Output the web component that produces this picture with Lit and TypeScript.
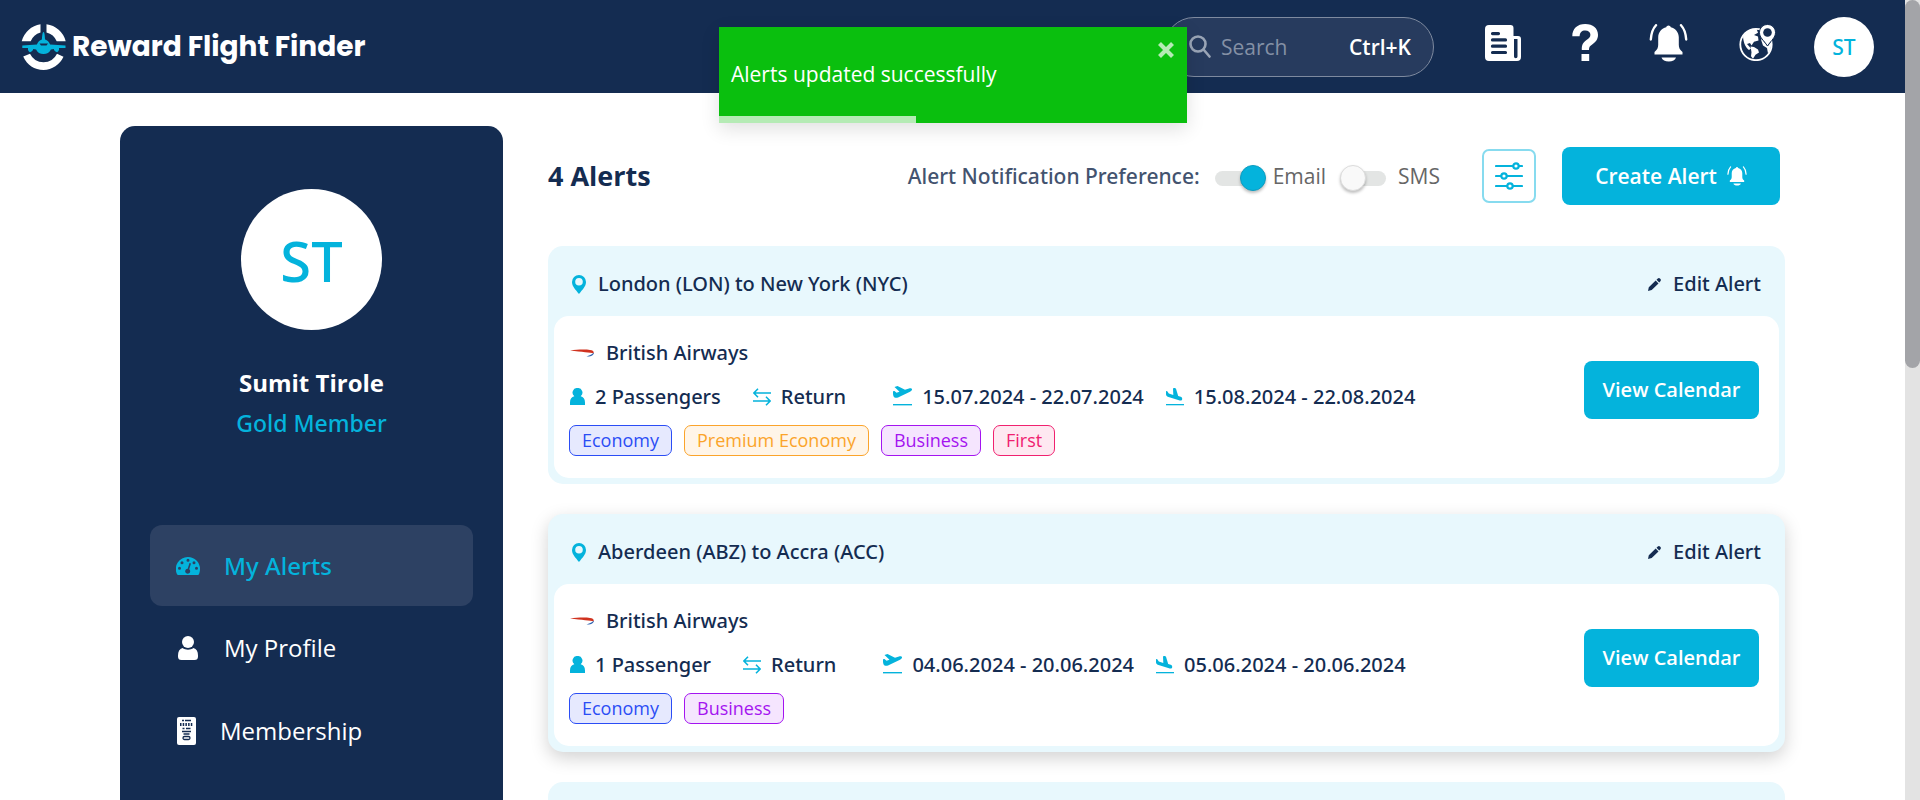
import { LitElement, html, css, svg } from "lit";
import { customElement, state } from "lit/decorators.js";

type Cabin = "Economy" | "Premium Economy" | "Business" | "First";
interface Alert {
  route: string;
  airline: string;
  passengers: string;
  trip: string;
  outbound: string;
  inbound: string;
  cabins: Cabin[];
  raised?: boolean;
}

const ALERTS: Alert[] = [
  {
    route: "London (LON) to New York (NYC)",
    airline: "British Airways",
    passengers: "2 Passengers",
    trip: "Return",
    outbound: "15.07.2024 - 22.07.2024",
    inbound: "15.08.2024 - 22.08.2024",
    cabins: ["Economy", "Premium Economy", "Business", "First"],
  },
  {
    route: "Aberdeen (ABZ) to Accra (ACC)",
    airline: "British Airways",
    passengers: "1 Passenger",
    trip: "Return",
    outbound: "04.06.2024 - 20.06.2024",
    inbound: "05.06.2024 - 20.06.2024",
    cabins: ["Economy", "Business"],
    raised: true,
  },
];

const CABIN_CLASS: Record<Cabin, string> = {
  Economy: "economy",
  "Premium Economy": "premium",
  Business: "business",
  First: "first",
};

const icon = (w: number, h: number, vb: string, body: unknown) =>
  html`<svg class="icon" width=${w} height=${h} viewBox=${vb} fill="currentColor" aria-hidden="true">${body}</svg>`;

const bellBody = svg`
  <path d="M19.500 1.500c1 0 2 .7 2.300 1.800 4.500 1.200 8 4.900 8 10v7.500c0 3 1 5 3.700 7.200v2.500H5.500V28c2.700-2.200 3.700-4.200 3.700-7.200v-7.500c0-5.100 3.500-8.800 8-10 .3-1.100 1.300-1.800 2.300-1.800z"/>
  <path d="M12.500 33.500h14.500c-.8 2.600-3.500 4-7.200 4s-6.500-1.400-7.300-4z"/>
  <path d="M7 1.200C3.900 4.500 2.200 9.500 1.800 15.500M32 1.200C35.100 4.500 36.800 9.500 37.200 15.500" fill="none" stroke="currentColor" stroke-width="2.400" stroke-linecap="round"/>`;

const searchIcon = icon(22, 23, "0 0 22 23", svg`<circle cx="9" cy="9" r="7.500" fill="none" stroke="currentColor" stroke-width="2.600"/><path d="M14.500 14.500l6 7" stroke="currentColor" stroke-width="2.600" stroke-linecap="round"/>`);
const newsIcon = icon(36, 36, "0 0 36 36", svg`<path fill-rule="evenodd" d="M4 0h21.500a3 3 0 0 1 3 3v8H33a3 3 0 0 1 3 3v18a4 4 0 0 1-4 4H4a4 4 0 0 1-4-4V4a4 4 0 0 1 4-4zM29 14v17.500a1.500 1.500 0 0 0 3.500 0V14zM7.500 7a1.500 1.500 0 0 0 0 3.200h6a1.500 1.500 0 0 0 0-3.200zM7.500 13.300a1.500 1.500 0 0 0 0 3.200h13a1.500 1.500 0 0 0 0-3.200zM7.500 19.600a1.500 1.500 0 0 0 0 3.200h13a1.500 1.500 0 0 0 0-3.200zM7.500 25.900a1.500 1.500 0 0 0 0 3.200h13a1.500 1.500 0 0 0 0-3.200z"/>`);
const helpIcon = icon(26, 37, "0 0 26 37", svg`<path d="M.3 12.200C.3 4.800 5.300 0 13.200 0 21 0 26 4.400 26 10.800c0 4.600-2.300 7.300-5.800 9.700-2.600 1.800-3.200 2.700-3.200 5.500H9.800c-.1-5.200 1.100-7.500 4.700-10 2.700-1.900 3.900-3 3.900-5.200 0-2.800-2-4.400-5.200-4.400-3.400 0-5.400 2-5.600 5.800z"/><path d="M9.500 30h7.700v7H9.500z"/>`);
const bellIcon = icon(39, 38, "0 0 39 38", bellBody);
const globeIcon = icon(37, 37, "0 0 37 37", svg`
  <circle cx="17" cy="20.500" r="15.700" fill="none" stroke="currentColor" stroke-width="1.800"/>
  <path d="M4 12.500C7 7.500 12 4.500 17.500 4.700l1.500 4-4 2.300 4 1.500.5 4-4.500 1.200-2.500 3.800-1.500-2.500-3 1 4 4.500-2 1.500C7.500 24.500 4.500 20 4 12.500z"/>
  <path d="M11.500 22.500l3.500.5 4 2.500 1 3-3.500 2.200-2.500 4-2-2.500.5-4z"/>
  <path d="M22 15.500l1-.3 5.500 7 3.500-4c.5 4.500-.5 8.500-3 11.300l-1-5.500-4-2.500z"/>
  <path d="M28.500.5c4.500 0 8 3.500 8 8 0 5-4 7.500-8 13.500-4-6-8-8.500-8-13.500 0-4.500 3.500-8 8-8z" stroke="#142c51" stroke-width="1"/>
  <circle cx="28.500" cy="8.500" r="4.300" fill="#142c51"/>`);
const closeIcon = icon(18, 18, "0 0 18 18", svg`<path d="M2.500 2.500l13 13M15.500 2.500l-13 13" stroke="currentColor" stroke-width="4.200"/>`);
const slidersIcon = icon(28, 30, "0 0 28 30", svg`<g fill="none" stroke="currentColor" stroke-width="2.200" stroke-linecap="round"><path d="M1 5h16.500M24 5h3M1 15h5M12 15h15M1 25h11M18 25h9"/><circle cx="21" cy="5" r="2.700"/><circle cx="9" cy="15" r="2.700"/><circle cx="15" cy="25" r="2.700"/></g>`);
const smallBell = icon(20, 20, "0 0 39 38", bellBody);
const pinIcon = icon(14, 19, "0 0 14 19", svg`<path fill-rule="evenodd" d="M7 0a7 7 0 0 1 7 7c0 4.500-3.500 7.500-7 12-3.500-4.500-7-7.500-7-12a7 7 0 0 1 7-7zm0 3a3.800 3.800 0 1 0 0 7.600A3.800 3.800 0 0 0 7 3z"/>`);
const pencilIcon = icon(13, 13, "0 0 13 13", svg`<path d="M0 13l.8-3.800L7.700 2.600l2.800 2.800L3.700 12.100zM8.500 1.800L9.800.6c.7-.7 1.500-.7 2.200 0l.4.400c.7.700.7 1.500 0 2.200l-1.200 1.300z"/>`);
const baIcon = html`<svg class="icon" width="24" height="8" viewBox="0 0 24 8" aria-hidden="true"><path d="M0 1.600C8 .2 16 .5 20 .9c3 .4 4.200 1.500 3.500 3.600C20.500 3.200 12 3.400 0 1.600z" fill="#d0321f"/><path d="M24 3.500c-.3 2.800-3.500 4.500-7.500 4 2.500-1.200 5-1.300 7.500-4z" fill="#2f63b0"/></svg>`;
const personIcon = icon(15, 17, "0 0 15 17", svg`<path d="M7.500 0a4.600 4.600 0 0 1 3.200 8.200c2.600.6 4.300 2.600 4.300 6.300V17H0v-2.500c0-3.700 1.700-5.700 4.300-6.300A4.600 4.600 0 0 1 7.500 0z"/>`);
const swapIcon = icon(18, 18, "0 0 18 18", svg`<path d="M18 5H1M5 .7L.9 5 5 9.300M0 13h17M13 8.700l4.100 4.300-4.100 4.300" fill="none" stroke="currentColor" stroke-width="1.500"/>`);
const takeoffIcon = icon(19, 21, "0 0 19 21", svg`<path d="M0 5.300l1.500-.3 2 1.700 3-1L1.500 1 4.500 0l7.500 3.700 4-1.300c1.500-.5 2.800-.2 3 .8.200 1-.8 1.900-2 2.500L5 11.500c-2 .8-3.700.2-4.500-1.300C-.1 9 0 7 0 5.300z"/><path d="M0 18h19v1.400H0z"/>`);
const landingIcon = icon(18, 18, "0 0 18 18", svg`<path d="M0 3l1.300.2 1.500 2.400 4.500 1.300L7 .5C8 0 9.500-.2 10 .8l2.200 7.200 2.500.8c1.300.4 1.800 1.500 1.300 3.200-.8.600-2 .6-3 .3L2.500 9C.5 8.300 0 7.500 0 6z"/><path d="M0 16h18v1.300H0z"/>`);
const gaugeIcon = icon(24, 18, "0 0 24 18", svg`<path fill-rule="evenodd" d="M12 0a12 12 0 0 1 12 12c0 2-.4 3.800-1 5.200-.3.500-.7.800-1.200.8H2.200c-.5 0-.9-.3-1.200-.8A12 12 0 0 1 12 0zm0 1.800a1.500 1.500 0 1 0 0 3 1.500 1.500 0 0 0 0-3zM6 4.300a1.500 1.500 0 1 0 0 3 1.500 1.500 0 0 0 0-3zm12 0a1.500 1.500 0 1 0 0 3 1.500 1.500 0 0 0 0-3zM3.500 9.800a1.500 1.500 0 1 0 0 3 1.500 1.500 0 0 0 0-3zm17 0a1.500 1.500 0 1 0 0 3 1.500 1.500 0 0 0 0-3zM13.500 6l-1.800 5.700a2.500 2.500 0 1 0 1.500.5L15 6.500z"/>`);
const profileIcon = icon(20, 24, "0 0 20 24", svg`<circle cx="10" cy="6" r="6"/><path d="M4.500 12c3 2.200 8 2.200 11 0 3 .8 4.500 3.500 4.500 7.500v1A3.500 3.500 0 0 1 16.500 24h-13A3.500 3.500 0 0 1 0 20.500v-1C0 15.500 1.500 12.800 4.500 12z"/>`);
const memberIcon = icon(19, 28, "0 0 19 28", svg`<rect width="19" height="28" rx="2"/><g stroke="#142c51" fill="none"><path d="M5 3.500h2M8 3.500h6M5.500 11.500h2M9 11.500h4.500" stroke-width="1.500"/><path d="M3 7.500h13" stroke-width="3" stroke-dasharray="1.500 1.200"/><path d="M5 14.500h9M6.500 17h6" stroke-width="1.500"/><rect x="6" y="19.500" width="7" height="3" rx="1.500" stroke-width="1.300"/></g>`);
const logoMark = html`<svg class="mark" width="46" height="46" viewBox="0 0 46 46" aria-hidden="true">
  <path d="M19.500.3v8.100a15 15 0 0 0-9.800 8.800H.7A23 23 0 0 1 19.500.3zM25.500.3v8.100a15 15 0 0 1 10.200 8.800h9A23 23 0 0 0 25.500.3z" fill="#fff"/>
  <path d="M2.200 32.500L9 29.800a15 15 0 0 0 27 0l6.500 3A22.800 22.800 0 0 1 22.500 46c-9 0-16.500-5-20.300-13.500z" fill="#fff"/>
  <path d="M22.500 8c1.200 0 1.300 5 1.600 7.500 2.300.6 4 2.500 5 5l15.400 1v2.400H38c.3 2-.4 3.500-1.900 4.300-1.700-.2-3-1.600-3.300-3.200l-2.900.5c-1.300 3-4 4.500-7.400 4.500s-6.100-1.500-7.400-4.500l-2.900-.5c-.3 1.600-1.600 3-3.300 3.200-1.500-.8-2.200-2.300-1.900-4.300H1.300v-2.400l14.600-1c1-2.500 2.700-4.400 5-5C21.200 13 21.300 8 22.500 8z" fill="#04b3dc"/>
  <path d="M18.500 19.500h8.500l-1.500 2h-5.500z" fill="#142c51"/></svg>`;

@customElement("app-root")
export class AppRoot extends LitElement {
  @state() private email = true;
  @state() private sms = false;
  @state() private progress = 42;

  static styles = css`
    :host {
      --navy: #142c51;
      --cyan: #04b3dc;
      --pale: #e8f8fd;
      --face: "Open Sans", "Noto Sans", sans-serif;
      --medium: "Noto Sans", "Open Sans", sans-serif;
      display: grid;
      grid-template-columns: minmax(0, 1fr) 15px;
      height: 100vh;
      overflow: hidden;
      background: #fff;
      color: var(--navy);
      font: 500 20px/28px var(--medium);
    }
    * { box-sizing: border-box; }
    button { font: inherit; border: 0; padding: 0; margin: 0; background: none; color: inherit; cursor: pointer; }
    a { color: inherit; text-decoration: none; }
    h1, h2, p { margin: 0; font: inherit; }
    .icon { display: block; flex: none; }
    .page { overflow: hidden; }
    .scroll { background: #e3e3e3; }
    .thumb { height: 46%; border-radius: 8px; background: #a3a4a8; }

    .header { display: flex; align-items: center; height: 93px; padding: 0 31px 0 21px; background: var(--navy); color: #fff; }
    .brand { display: flex; align-items: center; gap: 5px; margin-right: auto; font: 700 28px/40px Poppins, "Open Sans", sans-serif; }
    .mark { display: block; }
    .search { display: flex; align-items: center; gap: 10px; width: 270px; height: 60px; padding: 0 22px 0 24px; border: 1px solid #7e8a9f; border-radius: 30px; background: #273b5e; color: #9aa5b6; }
    .search input { flex: 1; min-width: 0; border: 0; padding: 0; background: none; outline: 0; font: 400 21px/28px var(--face); color: #fff; }
    .search input::placeholder { color: #8490a5; opacity: 1; }
    .search kbd { font: 600 21px/28px var(--face); color: #fff; }
    .tools { display: flex; align-items: center; gap: 51px; margin: 0 38px 8px 51px; }
    .me { display: grid; place-items: center; width: 60px; height: 60px; border-radius: 50%; background: #fff; color: var(--cyan); font-size: 21px; }

    .toast { position: absolute; top: 27px; left: calc(50% - 241px); display: flex; flex-direction: column; width: 468px; height: 96px; background: #0abf0e; color: #fff; box-shadow: 0 6px 18px rgba(0, 0, 0, 0.12); }
    .toast-row { display: flex; flex: 1; align-items: flex-start; justify-content: space-between; padding: 14px 12px 0 12px; }
    .toast-row p { padding-top: 19px; font: 400 21px/28px var(--face); }
    .toast-row button { color: #b5ebb5; }
    .track { height: 7px; }
    .bar { height: 100%; background: #b5ebb5; }

    .body { display: grid; grid-template-columns: 383px minmax(0, 1fr); gap: 45px; padding: 33px 120px 0; }
    .side { min-height: 900px; padding: 63px 30px; border-radius: 15px; background: var(--navy); color: #fff; }
    .who { display: flex; flex-direction: column; align-items: center; text-align: center; }
    .photo { display: grid; place-items: center; width: 141px; height: 141px; margin-bottom: 37px; border-radius: 50%; background: #fff; color: var(--cyan); font-size: 56px; }
    .name { font: 700 24px/32px var(--face); }
    .tier { margin-top: 8px; color: var(--cyan); font-size: 23px; line-height: 32px; }
    .nav { margin-top: 86px; }
    .nav a { display: flex; align-items: center; gap: 24px; height: 83px; padding: 0 26px; border-radius: 12px; font: 400 24px/32px var(--face); }
    .nav a.on { height: 81px; background: #2d4163; color: var(--cyan); font: 500 24px/32px var(--medium); }
    .glyph { display: grid; place-items: center; width: 24px; }
    .glyph.narrow { width: 20px; }

    .bar-top { display: flex; align-items: center; height: 58px; margin: 21px 5px 41px 0; }
    .bar-top h1 { margin-right: auto; font: 700 27px/36px var(--face); }
    .pref { margin-right: 15px; color: #43536f; font-size: 21px; }
    .toggle { display: flex; align-items: center; gap: 7px; color: #666; font: 400 21px/28px var(--face); }
    .toggle + .toggle { margin-left: 14px; gap: 12px; }
    .toggle input { appearance: none; display: flex; align-items: center; width: 46px; height: 15px; margin: 4px 0 0; border-radius: 8px; background: #e3e5e4; }
    .toggle input:checked { justify-content: flex-end; width: 51px; background: linear-gradient(90deg, #e3e5e4 46px, transparent 46px); }
    .toggle input::before { content: ""; width: 24px; height: 24px; border: 1px solid #dcdcdc; border-radius: 50%; background: #f9f9f9; box-shadow: 0 2px 3px rgba(0, 0, 0, 0.25); }
    .toggle input:checked::before { border-color: #0c9cc0; background: var(--cyan); }
    .filter { display: grid; place-items: center; width: 54px; height: 54px; margin: 0 26px 0 42px; border: 2px solid #87dbef; border-radius: 7px; color: var(--cyan); }
    .cta { display: flex; align-items: center; justify-content: center; gap: 10px; height: 58px; border-radius: 8px; background: var(--cyan); color: #fff; font: 600 20px/28px var(--face); }
    .create { width: 218px; font-size: 21px; }
    .view { width: 175px; margin-bottom: 14px; }

    .cards { display: flex; flex-direction: column; gap: 30px; }
    .card { padding: 0 6px 6px; border-radius: 15px; background: var(--pale); }
    .card.raised { box-shadow: 0 6px 18px rgba(0, 0, 0, 0.18); }
    .card-head { display: flex; align-items: center; gap: 12px; height: 70px; padding: 6px 18px 0; }
    .card-head h2 { margin-right: auto; }
    .pin { color: var(--cyan); }
    .edit { display: flex; align-items: center; gap: 12px; }
    .panel { display: flex; align-items: center; justify-content: space-between; height: 162px; padding: 0 20px 0 15px; border-radius: 15px; background: #fff; }
    .airline { display: flex; align-items: center; gap: 12px; padding-left: 1px; }
    .facts { display: flex; align-items: center; margin: 16px 0 14px; padding-left: 1px; }
    .fact { display: flex; align-items: center; gap: 10px; margin-right: 22px; white-space: nowrap; }
    .fact .icon { color: var(--cyan); }
    .fact.people { margin-right: 32px; }
    .fact.trip { margin-right: 47px; }
    .chips { display: flex; gap: 12px; }
    .chip { height: 31px; padding: 0 12px; border: 1px solid; border-radius: 7px; font: 400 18px/29px var(--face); }
    .economy { color: #2b4df5; background: #e6e9fe; }
    .premium { color: #fba42b; background: #fff5e8; }
    .business { color: #a414f0; background: #f5e5fe; }
    .first { color: #f0216f; background: #fee8f1; }
  `;

  private card(a: Alert) {
    return html`<article class="card ${a.raised ? "raised" : ""}">
      <div class="card-head">
        <span class="pin">${pinIcon}</span>
        <h2>${a.route}</h2>
        <button class="edit">${pencilIcon}Edit Alert</button>
      </div>
      <div class="panel">
        <div>
          <div class="airline">${baIcon}${a.airline}</div>
          <div class="facts">
            <span class="fact people">${personIcon}${a.passengers}</span>
            <span class="fact trip">${swapIcon}${a.trip}</span>
            <span class="fact">${takeoffIcon}${a.outbound}</span>
            <span class="fact">${landingIcon}${a.inbound}</span>
          </div>
          <div class="chips">${a.cabins.map((c) => html`<span class="chip ${CABIN_CLASS[c]}">${c}</span>`)}</div>
        </div>
        <button class="cta view">View Calendar</button>
      </div>
    </article>`;
  }

  render() {
    return html`
      <div class="page">
        <header class="header">
          <a class="brand" href="#">${logoMark}<span>Reward Flight Finder</span></a>
          <label class="search">${searchIcon}<input type="search" placeholder="Search" aria-label="Search" /><kbd>Ctrl+K</kbd></label>
          <nav class="tools">
            <a href="#news" aria-label="News">${newsIcon}</a>
            <a href="#help" aria-label="Help">${helpIcon}</a>
            <a href="#alerts" aria-label="Alerts">${bellIcon}</a>
            <a href="#region" aria-label="Region">${globeIcon}</a>
          </nav>
          <button class="me">ST</button>
        </header>
        <div class="body">
          <aside class="side">
            <div class="who">
              <div class="photo">ST</div>
              <p class="name">Sumit Tirole</p>
              <p class="tier">Gold Member</p>
            </div>
            <nav class="nav">
              <a class="on" href="#alerts"><span class="glyph">${gaugeIcon}</span>My Alerts</a>
              <a href="#profile"><span class="glyph">${profileIcon}</span>My Profile</a>
              <a href="#membership"><span class="glyph narrow">${memberIcon}</span>Membership</a>
            </nav>
          </aside>
          <main>
            <div class="bar-top">
              <h1>4 Alerts</h1>
              <span class="pref">Alert Notification Preference:</span>
              <label class="toggle"><input type="checkbox" .checked=${this.email} @change=${() => (this.email = !this.email)} />Email</label>
              <label class="toggle"><input type="checkbox" .checked=${this.sms} @change=${() => (this.sms = !this.sms)} />SMS</label>
              <button class="filter" aria-label="Filter alerts">${slidersIcon}</button>
              <button class="cta create">Create Alert ${smallBell}</button>
            </div>
            <div class="cards">
              ${ALERTS.map((a) => this.card(a))}
              <article class="card"><div class="card-head"></div></article>
            </div>
          </main>
        </div>
      </div>
      <div class="scroll"><div class="thumb"></div></div>
      <div class="toast" role="status">
        <div class="toast-row"><p>Alerts updated successfully</p><button aria-label="Close">${closeIcon}</button></div>
        <div class="track"><div class="bar" style="width:${this.progress}%"></div></div>
      </div>
    `;
  }
}
